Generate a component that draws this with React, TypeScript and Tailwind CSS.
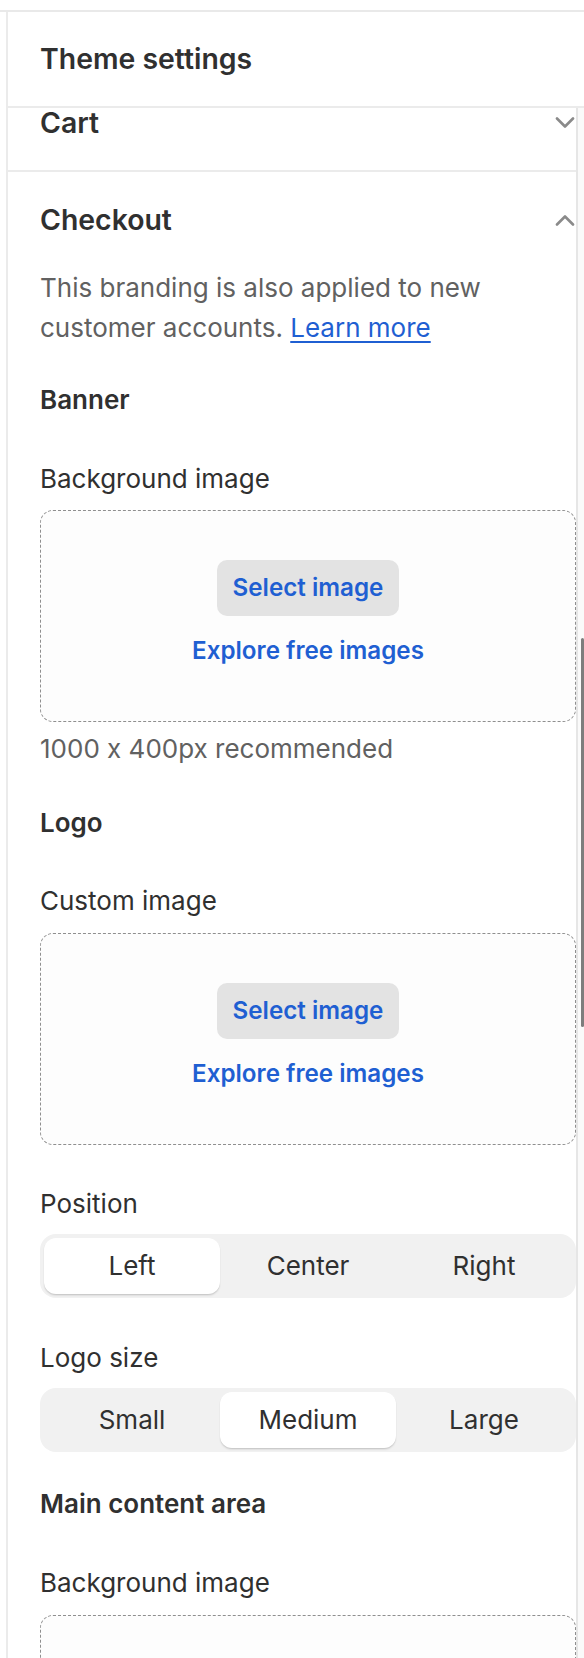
import React from "react";

function Chevron({ up }: { up?: boolean }) {
  return (
    <svg width="20" height="12" viewBox="0 0 20 12" fill="none" className="mr-[1px]">
      <polyline
        points={up ? "2,10.5 10,2.5 18,10.5" : "2,1.5 10,9.5 18,1.5"}
        stroke="#8a8a8a"
        strokeWidth="2.6"
        strokeLinecap="round"
        strokeLinejoin="round"
      />
    </svg>
  );
}

function UploadBox({ className = "" }: { className?: string }) {
  return (
    <div
      className={
        "h-[212px] rounded-[13px] border border-dashed border-[#8f8f8f] bg-[#fdfdfd] flex flex-col items-center pt-[49px] " +
        className
      }
    >
      <div className="h-[56px] w-[182px] rounded-[10px] bg-[#e3e3e3] flex items-center justify-center text-[24.2px] font-semibold text-[#1f5fd2]">
        Select image
      </div>
      <div className="mt-[17px] leading-[36px] text-[24.2px] font-semibold text-[#1f5fd2]">
        Explore free images
      </div>
    </div>
  );
}

function Segmented({ options, selected, className = "" }: { options: string[]; selected: number; className?: string }) {
  return (
    <div className={"h-[64px] rounded-[16px] bg-[#f1f1f1] p-[4px] flex " + className}>
      {options.map((o, i) => (
        <div
          key={o}
          className={
            "flex-1 flex items-center justify-center text-[26px] leading-[40px] text-[#303030] rounded-[12px] " +
            (i === selected ? "bg-white shadow-[0_1px_1px_rgba(0,0,0,0.10),0_2px_2px_rgba(0,0,0,0.07)]" : "")
          }
        >
          {o}
        </div>
      ))}
    </div>
  );
}

export default function App() {
  return (
    <div className="h-[1658px] overflow-hidden bg-white pt-[10px] font-['Inter','Noto_Sans',sans-serif] text-[#303030] [font-feature-settings:'calt'_0]">
      <div className="h-[1648px] border-t-2 border-[#e9e9e9]">
        <div className="ml-[6px] h-full border-l-2 border-[#ebebeb] flex flex-col">
          <div className="h-[96px] shrink-0 border-b-2 border-[#ebebeb] flex items-center pl-[32px]">
            <div className="text-[28.4px] leading-[40px] font-semibold">Theme settings</div>
          </div>
          <div className="flex flex-1 min-h-0">
            <div className="flex-1 min-w-0 border-r-2 border-[#e6e6e6] overflow-hidden">
              <div className="-mt-[32px]">
                <div className="h-[96px] border-b-2 border-[#ebebeb] flex items-center justify-between pl-[32px]">
                  <div className="text-[28.4px] leading-[40px] font-semibold">Cart</div>
                  <Chevron />
                </div>
                <div className="pl-[32px]">
                  <div className="h-[96px] flex items-center justify-between">
                    <div className="text-[28.4px] leading-[40px] font-semibold">Checkout</div>
                    <Chevron up />
                  </div>
                  <p className="text-[26px] leading-[40px] text-[#616161]">
                    This branding is also applied to new customer accounts.{" "}
                    <span className="text-[#1f5fd2] underline decoration-2 underline-offset-[4px]">Learn more</span>
                  </p>
                  <div className="mt-[32px] text-[26px] leading-[40px] font-semibold">Banner</div>
                  <div className="mt-[39px] text-[26px] leading-[40px]">Background image</div>
                  <UploadBox className="mt-[11px]" />
                  <div className="mt-[7px] text-[26px] leading-[40px] text-[#616161]">1000 x 400px recommended</div>
                  <div className="mt-[34px] text-[26px] leading-[40px] font-semibold">Logo</div>
                  <div className="mt-[38px] text-[26px] leading-[40px]">Custom image</div>
                  <UploadBox className="mt-[12px]" />
                  <div className="mt-[39px] text-[26px] leading-[40px]">Position</div>
                  <Segmented className="mt-[10px]" options={["Left", "Center", "Right"]} selected={0} />
                  <div className="mt-[40px] text-[26px] leading-[40px]">Logo size</div>
                  <Segmented className="mt-[10px]" options={["Small", "Medium", "Large"]} selected={1} />
                  <div className="mt-[32px] text-[26px] leading-[40px] font-semibold">Main content area</div>
                  <div className="mt-[39px] text-[26px] leading-[40px]">Background image</div>
                  <UploadBox className="mt-[12px]" />
                </div>
              </div>
            </div>
            <div className="w-[6px] shrink-0 bg-[#fafafa]">
              <div className="mt-[530px] ml-[3px] h-[389px] w-[3px] rounded-full bg-[#7d7d7d]" />
            </div>
          </div>
        </div>
      </div>
    </div>
  );
}
